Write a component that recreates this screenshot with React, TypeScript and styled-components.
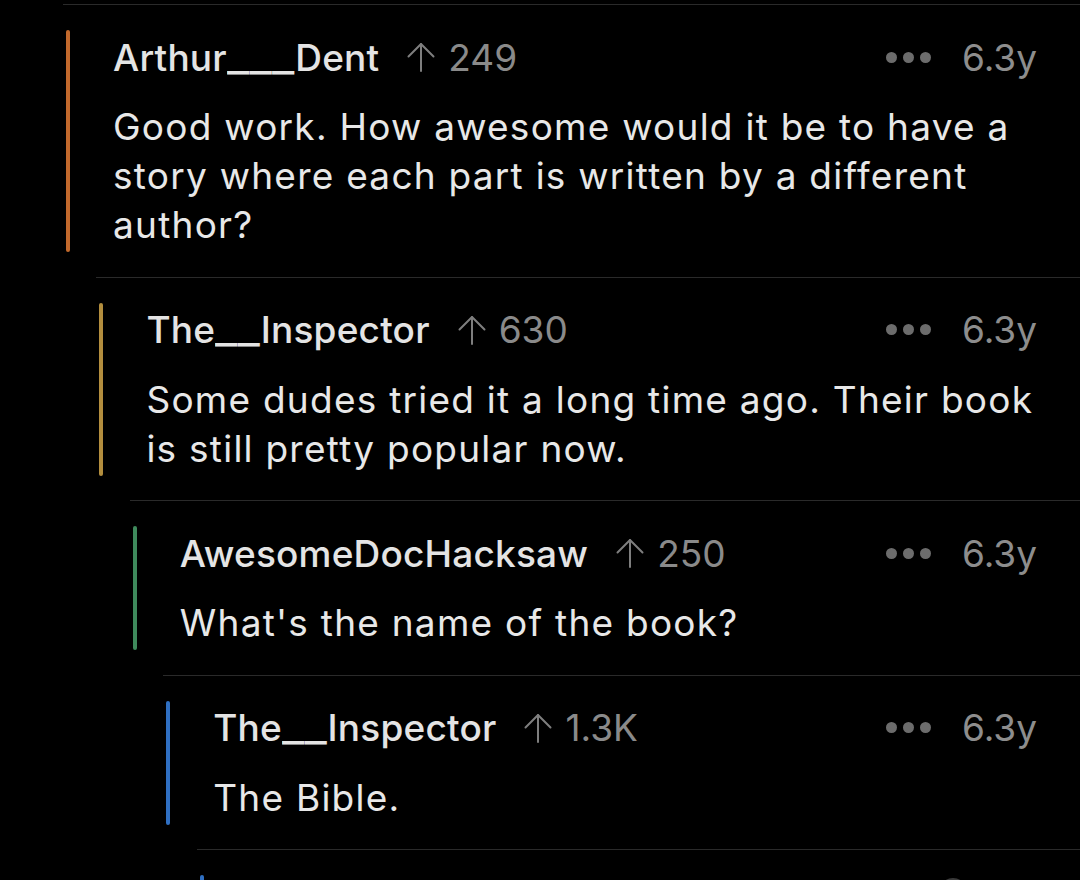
import React from "react";
import styled, { createGlobalStyle } from "styled-components";

const Global = createGlobalStyle`
  html, body { margin: 0; padding: 0; background: #000; }
  body { font-family: Inter, "Noto Sans", "Liberation Sans", sans-serif; -webkit-font-smoothing: antialiased; }
`;

const Page = styled.div`
  width: 1080px;
  height: 880px;
  overflow: hidden;
  background: #000;
  padding-top: 4px;
  box-sizing: border-box;
`;

const Comment = styled.div<{ $depth: number }>`
  display: flex;
  margin-left: ${(p) => 63 + p.$depth * 33.4}px;
  border-top: 1px solid #2a2a2a;
  padding: 25px 43px 24.5px 0;
`;

const Bar = styled.div<{ $color: string }>`
  flex: 0 0 4px;
  margin-left: 3px;
  border-radius: 2px;
  background: ${(p) => p.$color};
`;

const Content = styled.div`
  flex: 1;
  margin-left: 43px;
  padding-bottom: 3px;
  min-width: 0;
`;

const Header = styled.div`
  display: flex;
  align-items: center;
  height: 54px;
`;

const User = styled.span`
  font-size: 37px;
  font-weight: 500;
  color: #e4e4e4;
  letter-spacing: 0.2px;
  white-space: nowrap;
`;

const Under = styled.span<{ $n: number }>`
  display: inline-block;
  transform: scaleX(1.3);
  transform-origin: left center;
  margin-right: ${(p) => p.$n * 0.148}em;
`;

const ArrowIcon = styled.svg`
  width: 28px;
  height: 30px;
  margin-left: 28px;
  flex: none;
`;

const Score = styled.span`
  margin-left: 13px;
  font-size: 37px;
  color: #8a8a8a;
`;

const Spacer = styled.div`
  flex: 1;
`;

const Dots = styled.div`
  display: flex;
  gap: 6px;
  margin-right: 31px;
`;

const Dot = styled.span`
  width: 11px;
  height: 11px;
  border-radius: 50%;
  background: #6c6c6c;
`;

const Time = styled.span`
  font-size: 37px;
  color: #8d8d8d;
`;

const Body = styled.div`
  margin-top: 18px;
  font-size: 37px;
  line-height: 49px;
  letter-spacing: 1.25px;
  color: #e8e8e8;
`;

const TailRow = styled.div`
  display: flex;
  justify-content: flex-end;
  height: 60px;
  flex: 1;
  padding-right: 70px;
`;

const Ghost = styled.div`
  width: 28px;
  height: 28px;
  margin-top: 3px;
  border-radius: 50%;
  background: #3a3a3a;
`;

type C = { depth: number; color: string; user: string; score: string; body: string };

const comments: C[] = [
  {
    depth: 0,
    color: "#c2692c",
    user: "Arthur___Dent",
    score: "249",
    body: "Good work. How awesome would it be to have a story where each part is written by a different author?",
  },
  {
    depth: 1,
    color: "#b38e3e",
    user: "The__Inspector",
    score: "630",
    body: "Some dudes tried it a long time ago. Their book is still pretty popular now.",
  },
  {
    depth: 2,
    color: "#3f8a5c",
    user: "AwesomeDocHacksaw",
    score: "250",
    body: "What's the name of the book?",
  },
  {
    depth: 3,
    color: "#2f6fc2",
    user: "The__Inspector",
    score: "1.3K",
    body: "The Bible.",
  },
];

const UpArrow = () => (
  <ArrowIcon viewBox="0 0 28 30" fill="none" stroke="#7e7e7e" strokeWidth="2" strokeLinecap="round" strokeLinejoin="round">
    <path d="M14 2 V29" />
    <path d="M1.5 14.5 L14 2 L26.5 14.5" />
  </ArrowIcon>
);

const UserName = ({ name }: { name: string }) => {
  const parts = name.split(/(_+)/).filter(Boolean);
  return (
    <User>
      {parts.map((p, i) =>
        p.startsWith("_") ? (
          <Under key={i} $n={p.length}>
            {p}
          </Under>
        ) : (
          <React.Fragment key={i}>{p}</React.Fragment>
        )
      )}
    </User>
  );
};

const CommentView = ({ c }: { c: C }) => (
  <Comment $depth={c.depth}>
    <Bar $color={c.color} />
    <Content>
      <Header>
        <UserName name={c.user} />
        <UpArrow />
        <Score>{c.score}</Score>
        <Spacer />
        <Dots>
          <Dot />
          <Dot />
          <Dot />
        </Dots>
        <Time>6.3y</Time>
      </Header>
      <Body>{c.body}</Body>
    </Content>
  </Comment>
);

export default function App() {
  return (
    <Page>
      <Global />
      {comments.map((c, i) => (
        <CommentView key={i} c={c} />
      ))}
      <Comment $depth={4}>
        <Bar $color="#2f6fc2" />
        <TailRow>
          <Ghost />
        </TailRow>
      </Comment>
    </Page>
  );
}
